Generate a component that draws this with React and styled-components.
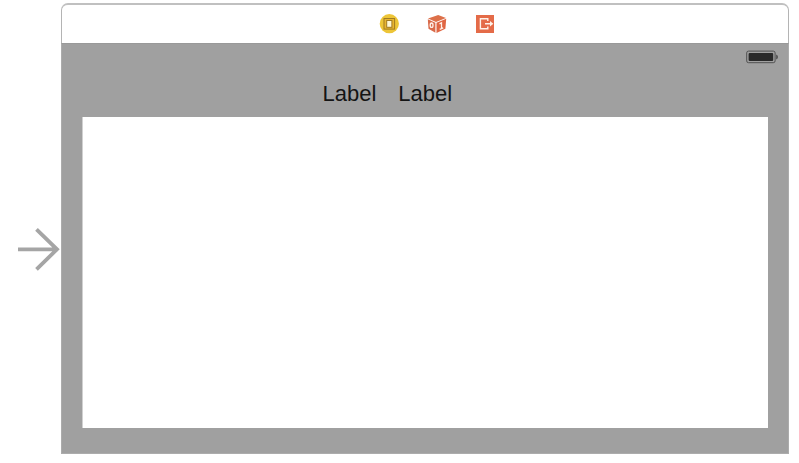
import React from "react";
import styled, { createGlobalStyle } from "styled-components";

const GlobalStyle = createGlobalStyle`
  html, body { margin: 0; background: #fff; }
  * { box-sizing: border-box; }
`;

const Canvas = styled.main`
  display: flex;
  align-items: flex-start;
  width: 799px;
  height: 463px;
  overflow: hidden;
  background: #fff;
`;

const EntryPoint = styled.div`
  display: flex;
  align-items: center;
  justify-content: flex-end;
  width: 61px;
  height: 498px;
  svg { display: block; }
`;

const Scene = styled.section`
  display: flex;
  flex-direction: column;
  width: 728px;
  height: 451px;
  margin-top: 3px;
`;

const Dock = styled.header`
  display: flex;
  justify-content: center;
  gap: 28px;
  height: 40px;
  padding: 9px 0 0 24px;
  border: 1px solid #b4b4b4;
  border-width: 2px 1px 0;
  border-top-color: #c0c0c0;
  border-radius: 7px 7px 0 0;
  svg { display: block; }
`;

const View = styled.div`
  display: flex;
  flex-direction: column;
  flex: 1;
  background: #a0a0a0;
  border: 1px solid #acacac;
  border-top-color: #999;
  padding: 0 20px 25px;
`;

const StatusBar = styled.div`
  display: flex;
  justify-content: flex-end;
  height: 27px;
  padding-top: 6px;
  margin-right: -11px;
  svg { display: block; }
`;

const Labels = styled.div`
  display: flex;
  gap: 22px;
  height: 46px;
  padding: 10px 0 0 240.5px;
`;

const Label = styled.span`
  font: 22px/25px "Liberation Sans", Arial, sans-serif;
  color: #141414;
`;

const Content = styled.div`
  flex: 1;
  background: #fff;
  border-left: 1px solid #d0d0d0;
`;

const EntryArrow = () => (
  <svg width="43" height="46" viewBox="0 0 43 46" fill="none" stroke="#a5a5a5" strokeWidth="3.8">
    <path d="M0 23.3H40M18.5 3.3 39 23.3 18.5 43.3" />
  </svg>
);

const ControllerIcon = () => (
  <svg width="20" height="20" viewBox="0 0 20 20">
    <circle cx="10.3" cy="9.7" r="9.6" fill="#edc537" />
    <rect x="5" y="4.5" width="10.6" height="10.6" fill="#e8b52f" stroke="#a17b22" />
    <rect x="7.7" y="6.5" width="5.2" height="6.8" fill="#fff8d8" stroke="#a17b22" />
  </svg>
);

const ResponderIcon = () => (
  <svg width="20" height="20" viewBox="0 0 20 20">
    <path d="M1 4.5 11.2 1 19 4 9 8Z" fill="#dd7049" />
    <path d="M.8 5.3 8.4 8.7V18.8L1.5 14.8Z" fill="#d96a49" />
    <path d="M9.5 8.7 19.2 4.8 18.4 14.8 9.5 19Z" fill="#e06643" />
    <ellipse cx="4.6" cy="11.2" rx="1.4" ry="2.2" fill="none" stroke="#fff0e8" strokeWidth="1.3" />
    <path d="m12.5 9.8 2-1V14.5M12.7 15.3l3.5-1.5" fill="none" stroke="#fff0e8" strokeWidth="1.3" />
  </svg>
);

const ExitIcon = () => (
  <svg width="20" height="20" viewBox="0 0 20 20">
    <path d="M1 1h18v18H1Z" fill="#e46b48" />
    <path d="M12.8 7V4.8H5.4v10h7.4v-2.2M10 9.8h7.2" fill="none" stroke="#fff2e9" strokeWidth="1.4" />
    <path d="m15 7 3.3 2.8L15 12.6Z" fill="#fff2e9" />
  </svg>
);

const BatteryIcon = () => (
  <svg width="33" height="14" viewBox="0 0 33 14">
    <rect x=".7" y="1.1" width="28.4" height="11.6" rx="1.8" fill="none" stroke="#505050" />
    <rect x="2.6" y="2.9" width="24.6" height="8" rx="1" fill="#292929" />
    <path d="M30.3 4.4q1.5.7 1.5 2.5t-1.5 2.5Z" fill="#3d3d3d" />
  </svg>
);

export default function App() {
  return (
    <>
      <GlobalStyle />
      <Canvas>
        <EntryPoint><EntryArrow /></EntryPoint>
        <Scene>
          <Dock>
            <ControllerIcon />
            <ResponderIcon />
            <ExitIcon />
          </Dock>
          <View>
            <StatusBar><BatteryIcon /></StatusBar>
            <Labels>
              <Label>Label</Label>
              <Label>Label</Label>
            </Labels>
            <Content />
          </View>
        </Scene>
      </Canvas>
    </>
  );
}
